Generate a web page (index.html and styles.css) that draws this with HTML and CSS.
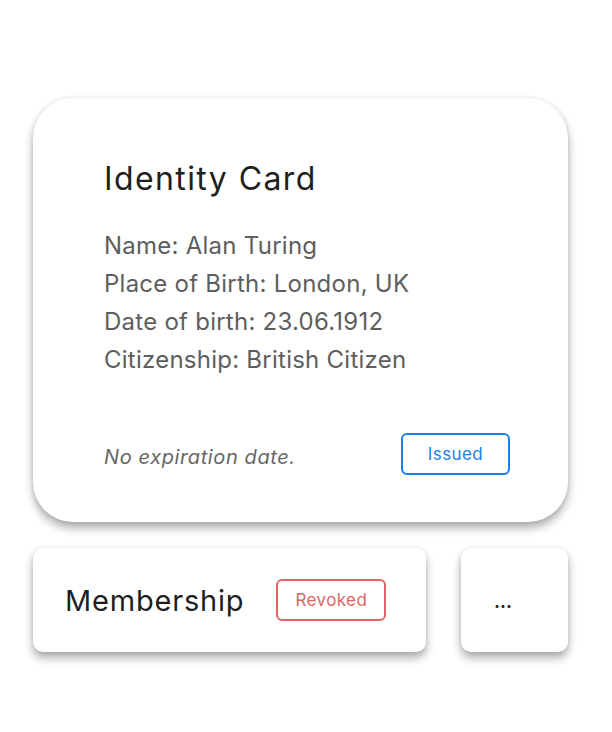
FILE: index.html
```html
<!DOCTYPE html>
<html lang="en">
<head>
<meta charset="utf-8">
<title>Credentials</title>
<link rel="stylesheet" href="styles.css">
</head>
<body>
<div class="page">
  <section class="card card-main">
    <h1 class="title">Identity Card</h1>
    <ul class="fields">
      <li>Name: Alan Turing</li>
      <li>Place of Birth: London, UK</li>
      <li>Date of birth: 23.06.1912</li>
      <li>Citizenship: British Citizen</li>
    </ul>
    <div class="footer">
      <span class="expiry">No expiration date.</span>
      <span class="badge badge-issued">Issued</span>
    </div>
  </section>
  <div class="row">
    <section class="card card-small card-member">
      <h2 class="member-title">Membership</h2>
      <span class="badge badge-revoked">Revoked</span>
    </section>
    <section class="card card-small card-more">
      <span class="more">...</span>
    </section>
  </div>
</div>
</body>
</html>
```
FILE: styles.css
```css
* { box-sizing: border-box; }
html, body { margin: 0; padding: 0; background: #ffffff; }
body {
  font-family: Inter, "DejaVu Sans", sans-serif;
  width: 612px;
  height: 732px;
  overflow: hidden;
}
.page {
  padding: 98px 44px 0 33px;
  display: flex;
  flex-direction: column;
  gap: 26px;
}
.card {
  background: #ffffff;
  box-shadow: 0 6px 10px rgba(0,0,0,0.32), 0 0 5px rgba(0,0,0,0.08);
}
.card-main {
  height: 424px;
  border-radius: 40px;
  padding: 60px 58px 47px 71px;
  display: flex;
  flex-direction: column;
}
.title {
  margin: 0;
  font-size: 32px;
  font-weight: 400;
  line-height: 42px;
  letter-spacing: 1.4px;
  color: #1f1f1f;
}
.fields {
  list-style: none;
  margin: 27px 0 0 0;
  padding: 0;
  font-size: 24px;
  line-height: 38px;
  letter-spacing: 0.25px;
  color: #5e5e5e;
}
.footer {
  margin-top: auto;
  display: flex;
  align-items: center;
  justify-content: space-between;
}
.expiry {
  font-style: italic;
  font-size: 20px;
  letter-spacing: 0.6px;
  color: #666666;
  padding-top: 5px;
}
.badge {
  display: flex;
  align-items: center;
  justify-content: center;
  width: 109px;
  height: 42px;
  border: 2.5px solid;
  border-radius: 6px;
  font-size: 17px;
  letter-spacing: 0.4px;
}
.badge-issued { color: #1a7fea; border-color: #1a7fea; }
.badge-revoked { color: #e06464; border-color: #e06464; width: 110px; }
.row {
  display: flex;
  gap: 35px;
}
.card-small {
  height: 104px;
  border-radius: 10px;
  display: flex;
  align-items: center;
}
.card-member {
  width: 393px;
  padding-left: 32px;
  gap: 32px;
}
.member-title {
  margin: 0;
  font-size: 29px;
  font-weight: 400;
  letter-spacing: 0.8px;
  color: #1f1f1f;
}
.card-more {
  width: 107px;
  padding-left: 33px;
}
.more {
  font-size: 18px;
  font-weight: 700;
  color: #222;
  margin-top: 2px;
}
```
